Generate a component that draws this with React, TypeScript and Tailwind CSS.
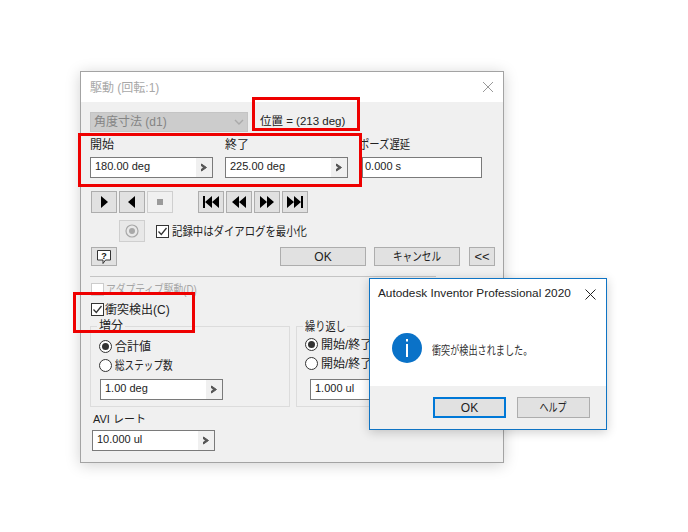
const uiFont = "font-['Liberation_Sans','Noto_Sans_CJK_JP',sans-serif]";

// narrow CJK labels: the reference font is taller than it is wide
function Narrow({ text, className }: { text: string; className: string }) {
  return <span className={`inline-block whitespace-nowrap text-[12px] ${className}`}>{text}</span>;
}

function ValueField({ value, className }: { value: string; className: string }) {
  return (
    <div className={`flex h-[21px] border border-[#7a7a7a] bg-white ${className}`}>
      <div className="flex-1 pl-[4px] text-[11px] leading-[17px] text-[#222]">{value}</div>
      <div className="flex w-[16px] items-center justify-center bg-[#f0f0f0]">
        <svg width="8" height="9" viewBox="0 0 8 9">
          <path d="M1.5 1 L6.5 4.5 L1.5 8 L1.5 6 L3.8 4.5 L1.5 3 Z" fill="#555" stroke="#555" strokeWidth="1" />
        </svg>
      </div>
    </div>
  );
}

function MediaButton({ children, disabled }: { children: React.ReactNode; disabled?: boolean }) {
  return (
    <div className={`flex h-[22px] w-[26px] items-center justify-center border ${disabled ? 'border-[#cfcfcf] bg-[#f0f0f0]' : 'border-[#adadad] bg-[#e1e1e1]'}`}>
      {children}
    </div>
  );
}

function Glyph({ d }: { d: string }) {
  return (
    <svg width="18" height="14" viewBox="0 0 18 14">
      <path d={d} fill="#000" />
    </svg>
  );
}

function PushButton({ children, className }: { children: React.ReactNode; className: string }) {
  return (
    <div className={`flex h-[19px] items-center justify-center border border-[#adadad] bg-[#e1e1e1] text-[#222] ${className}`}>
      {children}
    </div>
  );
}

function Check({ checked, disabled }: { checked?: boolean; disabled?: boolean }) {
  return (
    <div className={`flex h-[13px] w-[13px] shrink-0 items-center justify-center border bg-white ${disabled ? 'border-[#ccc]' : 'border-[#333]'}`}>
      {checked && (
        <svg width="11" height="11" viewBox="0 0 11 11">
          <path d="M1.5 5.5 L4.3 8.5 L9.5 2" fill="none" stroke="#333" strokeWidth="1.3" />
        </svg>
      )}
    </div>
  );
}

function Radio({ children, checked }: { children: React.ReactNode; checked?: boolean }) {
  return (
    <div className="flex h-[17px] items-center gap-[3px] text-[12px] text-[#222]">
      <div className="flex h-[13px] w-[13px] shrink-0 items-center justify-center rounded-full border border-[#333] bg-white">
        {checked && <div className="h-[7px] w-[7px] rounded-full bg-[#333]" />}
      </div>
      {children}
    </div>
  );
}

function DriveDialog() {
  return (
    <div className="absolute left-[80px] top-[71px] h-[392px] w-[424px] border border-[#a3a3a3] bg-[#f0f0f0] shadow-[0_2px_14px_rgba(0,0,0,0.18)]">
      <div className="flex h-[30px] items-center justify-between bg-white px-[9px] text-[12px] text-[#a8a8a8]">
        <span className="mt-[1px]">駆動 (回転:1)</span>
        <svg width="12" height="12" viewBox="0 0 12 12">
          <path d="M1 1 L11 11 M11 1 L1 11" stroke="#999" strokeWidth="1" />
        </svg>
      </div>

      <div className="pl-[9px]">
        <div className="mt-[10px] flex h-[20px] items-center">
          <div className="flex h-[20px] w-[158px] items-center justify-between border border-[#c4c4c4] bg-[#cccccc] px-[3px] text-[12px] text-[#848484]">
            <span>角度寸法 (d1)</span>
            <svg width="10" height="7" viewBox="0 0 10 7">
              <path d="M1 1 L5 5 L9 1" fill="none" stroke="#aaa" strokeWidth="1.4" />
            </svg>
          </div>
          <span className="ml-[12px] text-[11.5px] text-[#222]">位置 = (213 deg)</span>
        </div>

        <div className="mt-[5px] flex text-[12px] text-[#222]">
          <div className="w-[123px]">
            <div className="h-[20px] leading-[16px]">開始</div>
            <ValueField value="180.00 deg" className="w-[123px]" />
          </div>
          <div className="ml-[12px] w-[123px]">
            <div className="h-[20px] leading-[16px]">終了</div>
            <ValueField value="225.00 deg" className="w-[123px]" />
          </div>
          <div className="ml-[14px] w-[120px]">
            <div className="-ml-[3px] h-[20px] leading-[16px]">
              <Narrow text="ポーズ遅延" className="origin-left scale-x-[0.86]" />
            </div>
            <div className="h-[21px] border border-[#7a7a7a] bg-white pl-[2px] text-[11px] leading-[17px]">0.000 s</div>
          </div>
        </div>

        <div className="mt-[13px] ml-px flex gap-[2px]">
          <MediaButton><Glyph d="M6 1 L13 7 L6 13 Z" /></MediaButton>
          <MediaButton><Glyph d="M12 1 L5 7 L12 13 Z" /></MediaButton>
          <MediaButton disabled>
            <div className="h-[6px] w-[6px] bg-[#9a9a9a]" />
          </MediaButton>
          <div className="ml-[23px] flex gap-[2px]">
            <MediaButton><Glyph d="M1 1 H3 V13 H1 Z M10 1 V13 L3 7 Z M17 1 V13 L10 7 Z" /></MediaButton>
            <MediaButton><Glyph d="M9 1 V13 L2 7 Z M16 1 V13 L9 7 Z" /></MediaButton>
            <MediaButton><Glyph d="M2 1 L9 7 L2 13 Z M9 1 L16 7 L9 13 Z" /></MediaButton>
            <MediaButton><Glyph d="M1 1 L8 7 L1 13 Z M8 1 L15 7 L8 13 Z M15 1 H17 V13 H15 Z" /></MediaButton>
          </div>
        </div>

        <div className="mt-[7px] ml-[29px] flex h-[22px] items-center">
          <div className="flex h-[22px] w-[26px] items-center justify-center border border-[#cfcfcf] bg-[#e8e8e8]">
            <svg width="14" height="14" viewBox="0 0 14 14">
              <circle cx="7" cy="7" r="6" fill="none" stroke="#a8a8a8" strokeWidth="1.2" />
              <circle cx="7" cy="7" r="3" fill="#a8a8a8" />
            </svg>
          </div>
          <div className="ml-[11px]"><Check checked /></div>
          <Narrow text="記録中はダイアログを最小化" className="ml-[3px] mt-[2px] origin-left scale-x-[0.865] text-[#222]" />
        </div>

        <div className="mt-[5px] ml-px flex">
          <div className="flex h-[19px] w-[26px] items-center justify-center border border-[#adadad] bg-[#e1e1e1]">
            <svg width="16" height="16" viewBox="0 0 16 16">
              <path d="M1.5 1.5 H14.5 V11 H9.5 L7 14.5 V11 H1.5 Z" fill="#fff" stroke="#333" strokeWidth="1" />
              <text x="8" y="9.5" textAnchor="middle" fontSize="9" fontWeight="700" fill="#111" fontFamily="Liberation Sans">?</text>
            </svg>
          </div>
          <PushButton className="ml-[163px] w-[86px] text-[12px]">OK</PushButton>
          <PushButton className="ml-[8px] w-[86px]">
            <Narrow text="キャンセル" className="scale-x-[0.8]" />
          </PushButton>
          <PushButton className="ml-[9px] w-[26px] text-[13px]">{'<<'}</PushButton>
        </div>

        <div className="mt-[10px] h-px w-[346px] bg-[#c4c4c4]" />

        <div className="mt-[6px] ml-px flex h-[13px] items-center gap-[2px] text-[#a5a5a5]">
          <Check disabled />
          <Narrow text="アダプティブ駆動(D)" className="origin-left scale-x-[0.81]" />
        </div>
        <div className="mt-[7px] ml-px flex h-[13px] items-center gap-[1px] text-[12px] text-[#222]">
          <Check checked />
          <span className="mt-[1px]">衝突検出(C)</span>
        </div>

        <div className="mt-[2px] flex">
          <fieldset className="h-[89px] w-[200px] border border-[#dcdcdc] pl-[8px]">
            <legend className="ml-[-2px] h-[16px] px-[2px] text-[12px] leading-[16px] text-[#222]">増分</legend>
            <div className="mt-[4px]">
              <Radio checked>合計値</Radio>
              <div className="mt-[2px]">
                <Radio><Narrow text="総ステップ数" className="origin-left scale-x-[0.8]" /></Radio>
              </div>
            </div>
            <ValueField value="1.00 deg" className="ml-px mt-[5px] w-[123px]" />
          </fieldset>
          <fieldset className="ml-[6px] h-[89px] w-[199px] border border-[#dcdcdc] pl-[8px]">
            <legend className="ml-[-2px] h-[16px] w-[44px] px-[2px] leading-[16px] text-[#222]">
              <Narrow text="繰り返し" className="origin-left scale-x-[0.85]" />
            </legend>
            <div className="mt-[2px]">
              <Radio checked>開始/終了</Radio>
              <div className="mt-[2px]"><Radio>開始/終了</Radio></div>
            </div>
            <ValueField value="1.000 ul" className="ml-[5px] mt-[7px] w-[123px]" />
          </fieldset>
        </div>

        <div className="mt-[4px] ml-[3px] h-[17px] text-[11px] leading-[17px] text-[#222]">AVI レート</div>
        <ValueField value="10.000 ul" className="ml-[2px] mt-[2px] w-[123px]" />
      </div>
    </div>
  );
}

function MessageBox() {
  return (
    <div className="absolute left-[369px] top-[278px] flex h-[152px] w-[238px] flex-col border border-[#0f74c4] bg-white shadow-[0_2px_10px_rgba(0,0,0,0.2)]">
      <div className="flex h-[30px] items-center justify-between pl-[8px] pr-[10px]">
        <span className="whitespace-nowrap text-[11.8px] text-[#222]">Autodesk Inventor Professional 2020</span>
        <svg width="11" height="11" viewBox="0 0 11 11">
          <path d="M0.5 0.5 L10.5 10.5 M10.5 0.5 L0.5 10.5" stroke="#222" strokeWidth="1" />
        </svg>
      </div>
      <div className="flex h-[77px] items-center pl-[22px]">
        <svg width="30" height="30" viewBox="0 0 30 30" className="shrink-0">
          <circle cx="15" cy="15" r="15" fill="#0a72c8" />
          <rect x="14" y="6" width="2" height="2.5" fill="#fff" />
          <rect x="14" y="11" width="2" height="13" fill="#fff" />
        </svg>
        <Narrow text="衝突が検出されました。" className="ml-[10px] mt-[6px] origin-left scale-x-[0.76] text-[#333]" />
      </div>
      <div className="flex flex-1 items-start bg-[#f0f0f0] pl-[63px] pt-[11px]">
        <div className="flex h-[21px] w-[73px] items-center justify-center border-2 border-[#0078d7] bg-[#e1e1e1] text-[12px] text-[#222]">OK</div>
        <div className="ml-[11px] flex h-[21px] w-[73px] items-center justify-center border border-[#adadad] bg-[#e1e1e1] text-[#222]">
          <Narrow text="ヘルプ" className="scale-x-[0.75]" />
        </div>
      </div>
    </div>
  );
}

export default function App() {
  return (
    <div className={`relative h-[532px] w-[688px] overflow-hidden bg-white ${uiFont}`}>
      <DriveDialog />
      <MessageBox />
      {/* red callouts drawn over the screenshot */}
      <div className="absolute left-[252px] top-[97px] h-[34px] w-[108px] border-[3px] border-[#ee0000]" />
      <div className="absolute left-[78px] top-[133px] h-[54px] w-[284px] border-[3px] border-[#ee0000]" />
      <div className="absolute left-[73px] top-[292px] h-[41px] w-[122px] border-[3px] border-[#ee0000]" />
    </div>
  );
}
